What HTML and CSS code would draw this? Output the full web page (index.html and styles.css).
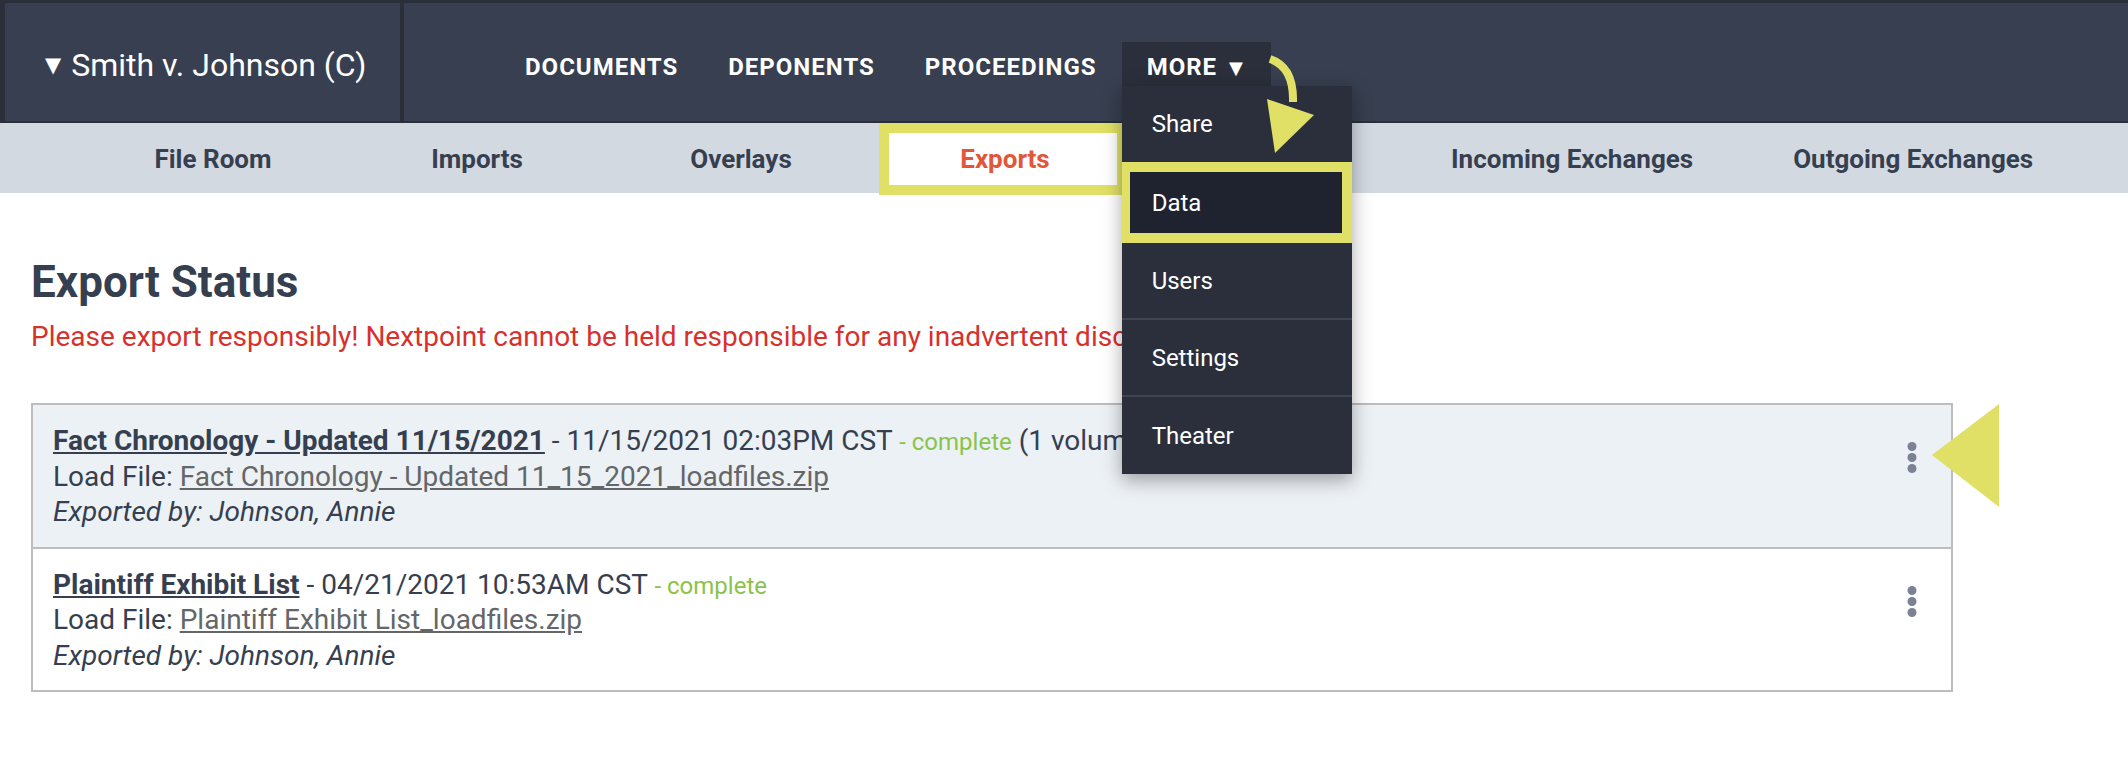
FILE: index.html
```html
<!DOCTYPE html>
<html lang="en">
<head>
<meta charset="utf-8">
<title>Export Status</title>
<link rel="stylesheet" href="styles.css">
</head>
<body>
<header class="topbar">
  <div class="case"><span class="tri">▼</span>Smith v. Johnson (C)</div>
  <nav class="mainnav">
    <a class="nav-item">Documents</a>
    <a class="nav-item">Deponents</a>
    <a class="nav-item">Proceedings</a>
    <div class="nav-item more">
      <span>More</span><span class="caret">▼</span>
      <ul class="menu">
        <li class="menu-item share">Share</li>
        <li class="menu-item data">Data</li>
        <li class="menu-item sep">Users</li>
        <li class="menu-item sep">Settings</li>
        <li class="menu-item last">Theater</li>
      </ul>
    </div>
  </nav>
</header>

<nav class="subnav">
  <a class="sub-item"><span>File Room</span></a>
  <a class="sub-item"><span>Imports</span></a>
  <a class="sub-item"><span>Overlays</span></a>
  <a class="sub-item active"><span>Exports</span></a>
  <a class="sub-item"><span>Productions</span></a>
  <a class="sub-item"><span>Incoming Exchanges</span></a>
  <a class="sub-item"><span>Outgoing Exchanges</span></a>
</nav>

<main class="content">
  <h1 class="title">Export Status</h1>
  <p class="warning">Please export responsibly! Nextpoint cannot be held responsible for any inadvertent disclosure.</p>

  <div class="exports">
    <div class="row highlighted">
      <div class="row-text">
        <div class="line"><a class="name">Fact Chronology - Updated 11/15/2021</a> - 11/15/2021 02:03PM CST <span class="status">- complete</span> (1 volume)</div>
        <div class="line">Load File: <a class="file">Fact Chronology - Updated 11_15_2021_loadfiles.zip</a></div>
        <div class="line by">Exported by: Johnson, Annie</div>
      </div>
      <svg class="kebab" width="10" height="32" viewBox="0 0 10 32"><circle cx="5" cy="4.5" r="4.5"/><circle cx="5" cy="15.5" r="4.5"/><circle cx="5" cy="26.5" r="4.5"/></svg>
    </div>
    <div class="row">
      <div class="row-text">
        <div class="line"><a class="name">Plaintiff Exhibit List</a> - 04/21/2021 10:53AM CST <span class="status">- complete</span></div>
        <div class="line">Load File: <a class="file">Plaintiff Exhibit List_loadfiles.zip</a></div>
        <div class="line by">Exported by: Johnson, Annie</div>
      </div>
      <svg class="kebab" width="10" height="32" viewBox="0 0 10 32"><circle cx="5" cy="4.5" r="4.5"/><circle cx="5" cy="15.5" r="4.5"/><circle cx="5" cy="26.5" r="4.5"/></svg>
    </div>
  </div>
</main>

<svg class="callout-arrow" width="70" height="110" viewBox="0 0 70 110">
  <path d="M15 9 Q39 17 38 52" fill="none" stroke="#e0e066" stroke-width="8"/>
  <polygon points="12,49 59,65 20,103" fill="#e0e066"/>
</svg>
<svg class="callout-pointer" width="72" height="108" viewBox="0 0 72 108">
  <polygon points="69,2 2,53 69,105" fill="#e0e066"/>
</svg>
</body>
</html>
```

FILE: styles.css
```css
* { box-sizing: border-box; }

body {
  margin: 0;
  background: #ffffff;
  font-family: Roboto, "Liberation Sans", Arial, sans-serif;
  color: #363f50;
  position: relative;
  min-height: 770px;
}

/* ---------- top bar ---------- */
.topbar {
  display: flex;
  height: 123px;
  background: #373f50;
  border-top: 3px solid #2a2f3a;
  border-bottom: 2px solid #2a2f3a;
}

.case {
  width: 404px;
  display: flex;
  align-items: center;
  padding: 6px 0 0 40px;
  border-left: 5px solid #2a2f3a;
  border-right: 4px solid #2a2f3a;
  color: #ffffff;
  font-size: 32px;
}

.tri {
  font-family: "DejaVu Sans", sans-serif;
  font-size: 21px;
  margin-right: 10px;
}

.mainnav {
  display: flex;
  align-items: center;
  margin-left: 96px;
  padding-top: 10px;
}

.nav-item {
  padding: 0 25px;
  color: #ffffff;
  font-size: 24px;
  font-weight: 700;
  text-transform: uppercase;
  letter-spacing: 1px;
}

.more {
  position: relative;
  display: flex;
  align-items: center;
  height: 44px;
  margin-bottom: 6px;
  padding: 6px 28px 0 25px;
  background: #2a2f3b;
}

.caret {
  font-family: "DejaVu Sans", sans-serif;
  font-size: 18px;
  margin-left: 12px;
  letter-spacing: 0;
}

.menu {
  position: absolute;
  top: 100%;
  left: 0;
  width: 230px;
  margin: 0;
  padding: 0;
  list-style: none;
  background: #2a2f3b;
  box-shadow: 0 6px 18px rgba(0, 0, 0, 0.35);
  z-index: 10;
}

.menu-item {
  display: flex;
  align-items: center;
  padding-left: 30px;
  color: #ffffff;
  font-size: 24px;
  font-weight: 400;
  text-transform: none;
  letter-spacing: 0;
}

.menu-item.share { height: 76px; }

.menu-item.data {
  height: 81px;
  padding-left: 22px;
  background: #1f2330;
  border: 10px solid #e0e066;
  border-left-width: 8px;
}

.menu-item.sep {
  height: 77px;
  border-bottom: 2px solid #3f4553;
}

.menu-item.last { height: 77px; }

/* ---------- sub navigation ---------- */
.subnav {
  display: flex;
  height: 70px;
  padding-left: 81px;
  background: #d3d9e1;
}

.sub-item {
  position: relative;
  min-width: 264px;
  padding: 2px 50px 0;
  display: flex;
  align-items: center;
  justify-content: center;
  color: #363f50;
  font-size: 26px;
  font-weight: 700;
  white-space: nowrap;
}

.sub-item span {
  position: relative;
  z-index: 1;
}

.sub-item.active { color: #e2563a; }

.sub-item.active::before {
  content: "";
  position: absolute;
  left: 16px;
  right: 20px;
  top: 10px;
  bottom: 8px;
  background: #ffffff;
  outline: 10px solid #e0e066;
}

/* ---------- content ---------- */
.content {
  padding-left: 31px;
}

.title {
  margin: 63px 0 0;
  font-size: 44px;
  line-height: 53px;
  font-weight: 700;
  color: #363f50;
}

.warning {
  margin: 11px 0 0;
  font-size: 28px;
  line-height: 34px;
  color: #d8312c;
  white-space: nowrap;
}

.exports {
  width: 1922px;
  margin-top: 49px;
  border: 2px solid #bdbdbd;
}

.row {
  display: flex;
  padding: 18px 20px 17px 20px;
  border-bottom: 2px solid #bdbdbd;
}

.row:last-child { border-bottom: none; }

.row.highlighted { background: #ecf1f5; }

.row-text {
  flex: 1;
  font-size: 28px;
  line-height: 35.5px;
  color: #363f50;
  white-space: nowrap;
}

.name {
  font-weight: 700;
  color: #363f50;
  text-decoration: underline;
}

.status {
  color: #8bc34a;
  font-size: 24px;
  line-height: 1;
}

.file {
  color: #646668;
  text-decoration: underline;
}

.by { font-style: italic; }

.kebab {
  flex: none;
  margin: 19px 14px 0 0;
  fill: #7b8294;
}

/* ---------- annotation overlays ---------- */
.callout-arrow {
  position: absolute;
  left: 1255px;
  top: 50px;
  z-index: 20;
}

.callout-pointer {
  position: absolute;
  left: 1930px;
  top: 402px;
  z-index: 20;
}
```
